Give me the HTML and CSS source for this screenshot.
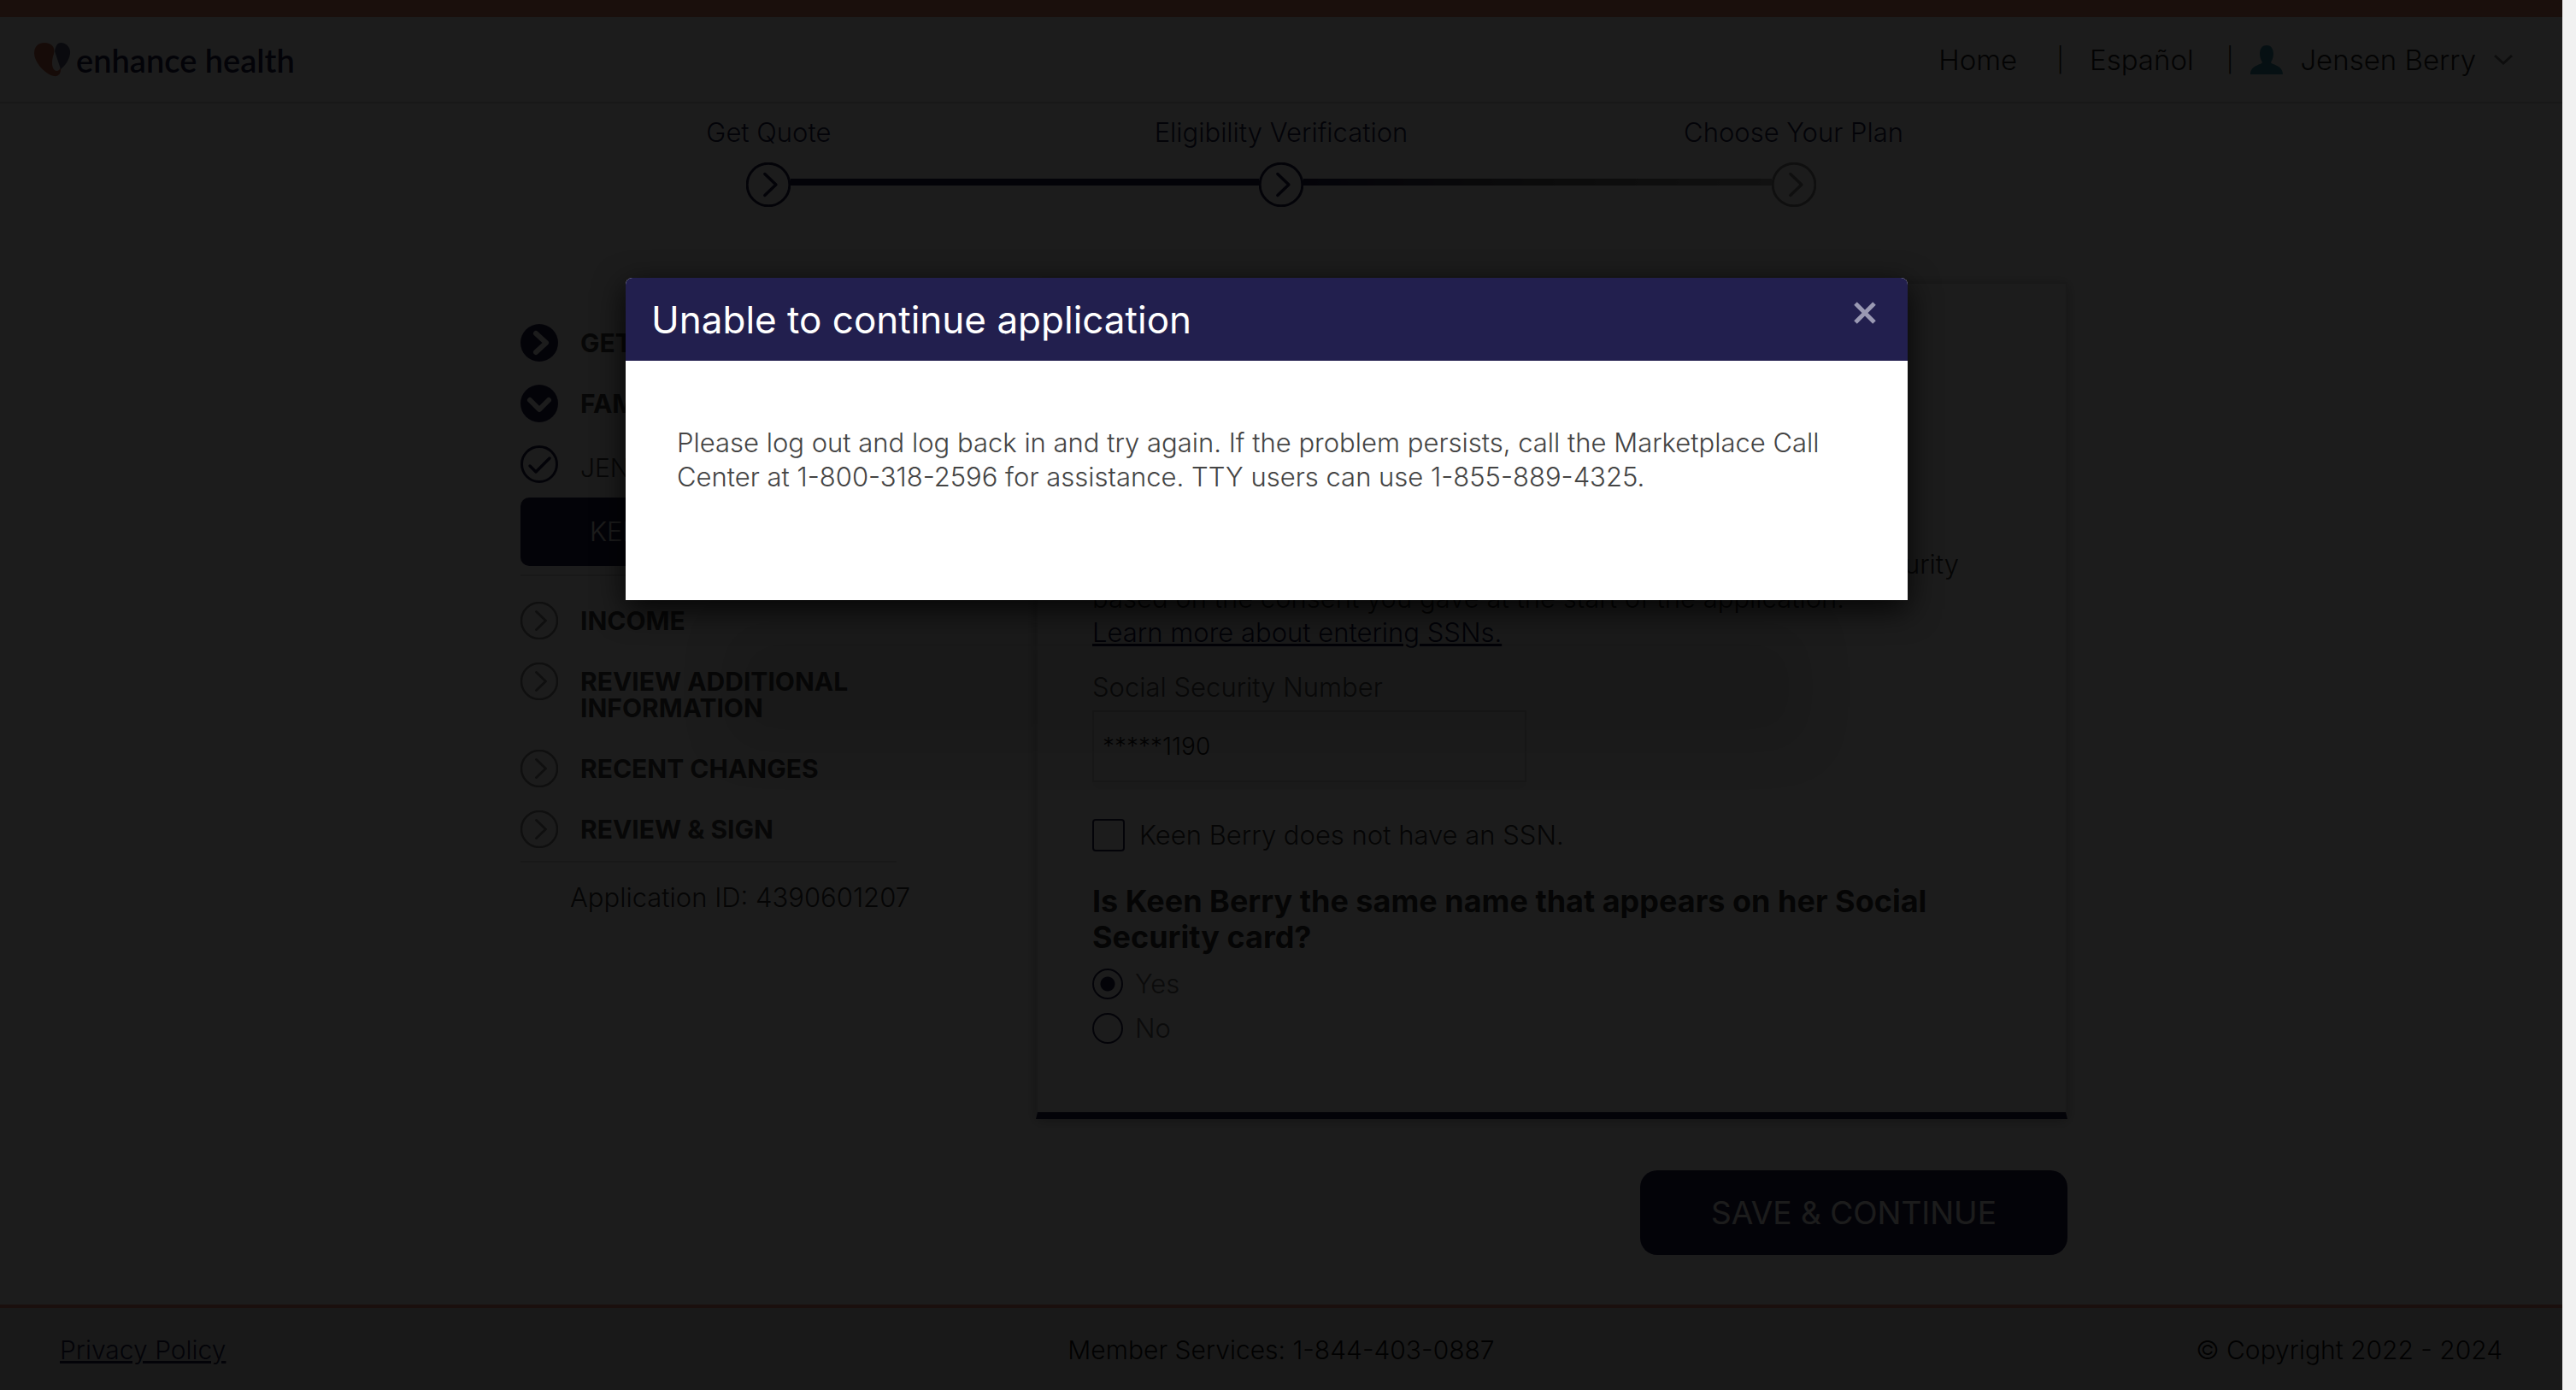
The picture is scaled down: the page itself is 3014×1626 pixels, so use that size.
FILE: index.html
```html
<!DOCTYPE html>
<html lang="en">
<head>
<meta charset="utf-8">
<title>Enhance Health</title>
<link rel="stylesheet" href="styles.css">
</head>
<body>
<svg width="0" height="0" class="sprite" aria-hidden="true">
  <symbol id="next" viewBox="0 0 44 44"><circle cx="22" cy="22" r="21" fill="none" stroke="currentColor" stroke-width="2.5"/><path d="M18.500 11.500 29.500 22 18.500 32.500" fill="none" stroke="currentColor" stroke-width="3" stroke-linecap="round" stroke-linejoin="round"/></symbol>
</svg>
<div class="page">
  <header class="header">
    <a class="logo" href="#">
      <svg width="43" height="40" viewBox="0 0 43 40" aria-hidden="true"><path d="M12 0C20 0 25 5 23 13C20 21 20 32 26 33C29 33 30 31 31 29C32 36 28 40 23 39C13 37 0 23 0 12C0 5 4 0 12 0Z" fill="#c8654a"/><path d="M31 0C38 0 43 6 42 13C41 20 36 27 31 31L24 10C25 4 27 0 31 0Z" fill="#5a6080"/></svg>
      <span>enhance health</span>
    </a>
    <nav class="nav">
      <a class="nav-home" href="#">Home</a><span class="bar">|</span>
      <a class="nav-lang" href="#">Español</a><span class="bar">|</span>
      <button class="user" type="button">
        <svg width="38" height="34" viewBox="0 0 38 34" aria-hidden="true"><path d="M19 0C25 0 27 5 27 10C27 15 25 18 24 20C25 23 38 23 38 34H0C0 23 13 23 14 20C13 18 11 15 11 10C11 5 13 0 19 0Z" fill="#3790a8"/></svg>
        <span>Jensen Berry</span>
        <svg width="24" height="14" viewBox="0 0 24 14" aria-hidden="true"><path d="M2 2 12 11 22 2" fill="none" stroke="#777" stroke-width="3"/></svg>
      </button>
    </nav>
  </header>

  <ol class="steps">
    <li class="step done"><span>Get Quote</span><svg width="52" height="52"><use href="#next"/></svg></li>
    <li class="step current"><span>Eligibility Verification</span><svg width="52" height="52"><use href="#next"/></svg></li>
    <li class="step todo"><span>Choose Your Plan</span><svg width="52" height="52"><use href="#next"/></svg></li>
  </ol>

  <main class="main">
    <aside class="side">
      <ul class="menu">
        <li class="item"><svg class="navy" width="44" height="44" viewBox="0 0 44 44"><circle cx="22" cy="22" r="22" fill="currentColor"/><path d="M18 11 30 22 18 33" fill="none" stroke="#fff" stroke-width="6" stroke-linecap="round" stroke-linejoin="round"/></svg><a href="#">GET STARTED</a></li>
        <li class="item"><svg class="navy" width="44" height="44" viewBox="0 0 44 44"><circle cx="22" cy="22" r="22" fill="currentColor"/><path d="M11 18 22 29 33 18" fill="none" stroke="#fff" stroke-width="6" stroke-linecap="round" stroke-linejoin="round"/></svg><a href="#">FAMILY &amp; HOUSEHOLD</a></li>
        <li class="item person"><svg class="navy" width="44" height="44" viewBox="0 0 44 44"><circle cx="22" cy="22" r="20.500" fill="none" stroke="currentColor" stroke-width="3"/><path d="M11 24 18 31 34 15" fill="none" stroke="currentColor" stroke-width="3.500" stroke-linecap="round" stroke-linejoin="round"/></svg><a href="#">JENSEN BERRY</a></li>
      </ul>
      <a class="active" href="#">KEEN BERRY</a>
      <hr class="rule">
      <ul class="menu later">
        <li class="item"><svg width="44" height="44"><use href="#next"/></svg><a href="#">INCOME</a></li>
        <li class="item"><svg width="44" height="44"><use href="#next"/></svg><a href="#">REVIEW ADDITIONAL INFORMATION</a></li>
        <li class="item"><svg width="44" height="44"><use href="#next"/></svg><a href="#">RECENT CHANGES</a></li>
        <li class="item"><svg width="44" height="44"><use href="#next"/></svg><a href="#">REVIEW &amp; SIGN</a></li>
      </ul>
      <hr class="rule last">
      <p class="appid">Application ID: 4390601207</p>
    </aside>

    <form class="form">
      <div class="card">
        <p class="text"><span class="line-end">We’ll verify this number with the records of the Social Security</span> based on the consent you gave at the start of the application.</p>
        <a class="learn" href="#">Learn more about entering SSNs.</a>
        <label class="label" for="ssn">Social Security Number</label>
        <input class="field" id="ssn" type="text" value="*****1190">
        <label class="choice check"><input type="checkbox"><span>Keen Berry does not have an SSN.</span></label>
        <fieldset class="question">
          <legend>Is Keen Berry the same name that appears on her Social Security card?</legend>
          <label class="choice radio"><input type="radio" name="same" checked><span>Yes</span></label>
          <label class="choice radio"><input type="radio" name="same"><span>No</span></label>
        </fieldset>
      </div>
      <button class="save" type="button">SAVE &amp; CONTINUE</button>
    </form>
  </main>

  <footer class="footer">
    <a href="#">Privacy Policy</a>
    <span>Member Services: 1-844-403-0887</span>
    <span class="copy">© Copyright 2022 - 2024</span>
  </footer>

  <div class="overlay">
    <section class="modal" role="dialog" aria-labelledby="modal-title">
      <div class="modal-head">
        <h2 id="modal-title">Unable to continue application</h2>
        <button class="close" type="button" aria-label="Close"><svg width="26" height="26" viewBox="0 0 26 26"><path d="M2 2 24 24M24 2 2 24" stroke="#9a99b3" stroke-width="5"/></svg></button>
      </div>
      <p class="modal-body">Please log out and log back in and try again. If the problem persists, call the Marketplace Call Center at 1-800-318-2596 for assistance. TTY users can use 1-855-889-4325.</p>
    </section>
  </div>
</div>
<div class="gutter"></div>
</body>
</html>
```
FILE: styles.css
```css
* { box-sizing: border-box; }
body {
  margin: 0;
  display: flex;
  min-height: 100vh;
  font: 300 31px/34px Inter, "Liberation Sans", sans-serif;
  color: #333;
  background: #fff;
}
a { color: inherit; text-decoration: none; }
ul, ol, p, h2, fieldset, legend { margin: 0; padding: 0; border: 0; list-style: none; }
button, input { font: inherit; color: inherit; }
.sprite { position: absolute; }

.page { position: relative; flex: 1; display: flex; flex-direction: column; min-width: 0; }
.gutter { width: 16px; background: #f1f1f1; }

.header {
  display: flex;
  justify-content: space-between;
  align-items: center;
  height: 121px;
  padding: 0 57px 0 40px;
  border-top: 20px solid #ec886d;
  border-bottom: 2px solid #dcdcdc;
}
.logo { display: flex; align-items: center; gap: 6px; font: 600 38px/40px Lato, sans-serif; color: #221f4e; }
.nav { display: flex; align-items: center; font-size: 33px; color: #222; }
.bar { padding-left: 46px; font-size: 28px; }
.nav-lang { margin-left: 30px; }
.nav-lang + .bar { padding-left: 38px; }
.user { display: flex; align-items: center; gap: 20px; margin-left: 20px; padding: 0; border: 0; background: none; }

.steps { display: grid; grid-template-columns: repeat(3, 1fr); width: 60%; margin: 0 auto; padding-top: 17px; color: #221f4e; }
.step { position: relative; display: flex; flex-direction: column; align-items: center; gap: 18px; }
.step:not(:last-child)::after {
  content: "";
  position: absolute;
  left: calc(50% + 26px);
  right: calc(26px - 50%);
  bottom: 25px;
  height: 8px;
  background: #221f4e;
}
.current:not(:last-child)::after { background: linear-gradient(90deg, #221f4e, #666 50%, #999); }
.todo svg { color: #888; }

.main {
  display: grid;
  grid-template-columns: 440px 1fr;
  gap: 163px;
  padding: 88px 579px 58px 609px;
}
.side { padding-top: 49px; }
.menu { display: grid; gap: 27px; }
.item { display: flex; gap: 26px; font-size: 30px; font-weight: 700; line-height: 31px; color: #444; }
.item svg { flex: none; color: #888; }
.item svg.navy { color: #221f4e; }
.item a { padding: 7px 0 6px; }
.person { font-weight: 300; }
.person a { padding: 11px 0 2px; }
.active { display: block; margin-top: 17px; padding: 23px 81px; border-radius: 10px; background: #221f4e; color: #fff; }
.rule { height: 2px; margin: 10px 0 30px; border: 0; background: #dcdcdc; }
.last { margin: 15px 0 24px; }
.appid { padding-left: 58px; white-space: nowrap; }

.form { display: flex; flex-direction: column; align-items: flex-end; gap: 60px; }
.card {
  display: flex;
  flex-direction: column;
  align-items: flex-start;
  width: 100%;
  padding: 308px 64px 80px;
  border: 2px solid #dedede;
  border-bottom: 8px solid #221f4e;
  box-shadow: 0 2px 14px rgba(0, 0, 0, .3);
  line-height: 40px;
}
.text { width: 1014px; }
.line-end { display: block; text-align: right; }
.learn { color: #221f4e; text-decoration: underline; }
.label { margin: 24px 0 7px; color: #555; }
.field { width: 508px; height: 84px; padding: 0 10px; border: 2px solid #dcdcdc; background: none; color: #222; font-size: 28px; box-shadow: 0 8px 8px rgba(0, 0, 0, .06); }
.choice { display: flex; align-items: center; }
.choice input { appearance: none; flex: none; margin: 0; border: 2px solid #221f4e; }
.check { gap: 17px; height: 38px; margin: 43px 0 37px; }
.check input { width: 38px; height: 38px; border-radius: 4px; }
.question { display: grid; gap: 16px; }
.question legend { margin-bottom: 16px; font-size: 36px; line-height: 42px; font-weight: 700; }
.radio { gap: 14px; height: 36px; color: #666; }
.radio input { width: 36px; height: 36px; border-radius: 50%; }
.radio input:checked { background: radial-gradient(circle, #221f4e 8px, transparent 9px); }
.save { width: 500px; height: 99px; border: 0; border-radius: 20px; background: #221f4e; color: #fff; font-size: 37px; font-weight: 400; }

.footer {
  display: grid;
  grid-template-columns: 1fr auto 1fr;
  align-items: center;
  flex: 1;
  min-height: 100px;
  padding: 2px 70px 0;
  border-top: 4px solid #e88a78;
  background: #e4e4e4;
  color: #111;
  font-size: 30px;
}
.footer a { color: #221f4e; text-decoration: underline; }
.copy { text-align: right; }

.overlay {
  position: absolute;
  inset: 0;
  display: flex;
  justify-content: center;
  align-items: flex-start;
  padding: 325px 34px 0 0;
  background: rgba(0, 0, 0, .89);
}
.modal {
  width: 1500px;
  border-radius: 8px 8px 0 0;
  background: #fff;
  box-shadow: 0 10px 36px rgba(0, 0, 0, .85), 0 290px 60px -120px rgba(0, 0, 0, .1);
}
.modal-head { display: flex; justify-content: space-between; height: 97px; padding: 25px 37px 0 30px; border-radius: 8px 8px 0 0; background: #221f4e; color: #fff; }
.modal-head h2 { font-size: 44px; line-height: 48px; font-weight: 400; }
.close { align-self: flex-start; display: flex; padding: 3px 0; border: 0; background: none; }
.modal-body { padding: 76px 60px 124px; line-height: 40px; color: #444; }
```
